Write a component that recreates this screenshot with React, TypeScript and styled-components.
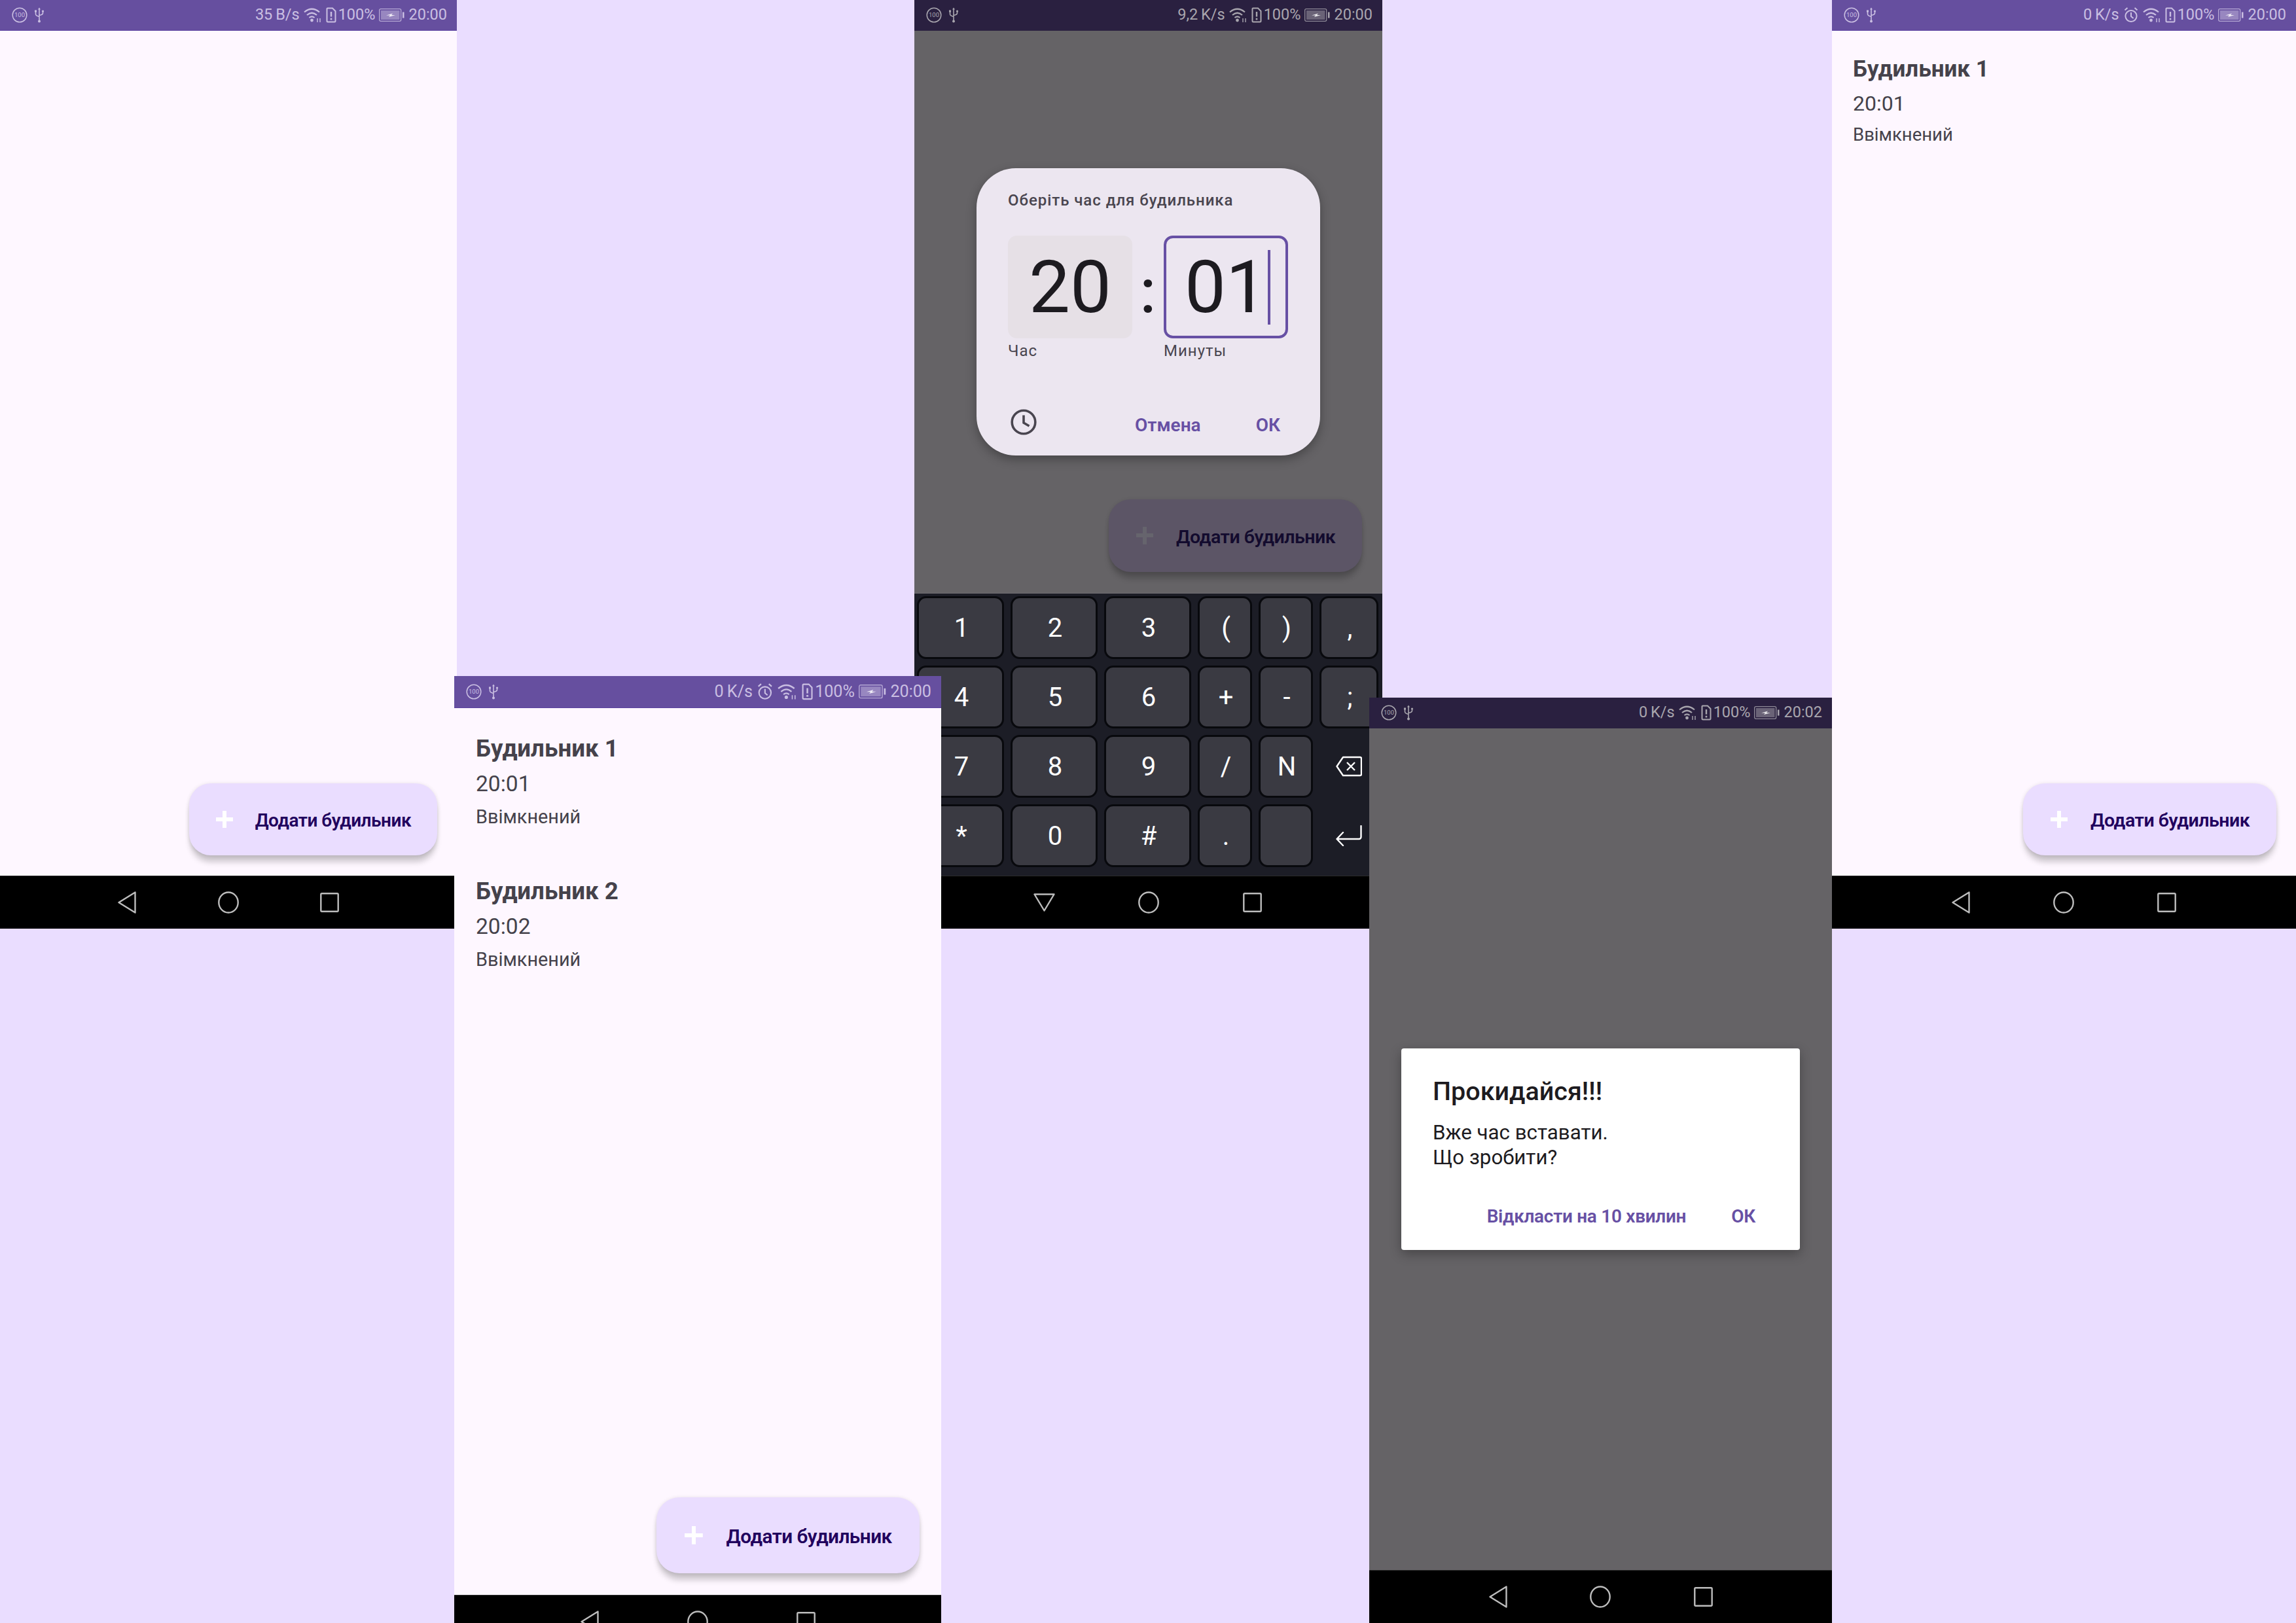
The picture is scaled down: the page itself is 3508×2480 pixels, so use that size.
import styled, { createGlobalStyle } from "styled-components";

const Global = createGlobalStyle`
  html, body {
    margin: 0;
    padding: 0;
    background: #eaddff;
  }
  * {
    box-sizing: border-box;
  }
`;

/////////////

const KEY_ROWS = [
  ["1", "2", "3", "(", ")", ","],
  ["4", "5", "6", "+", "-", ";"],
  ["7", "8", "9", "/", "N", "backspace"],
  ["*", "0", "#", ".", "", "enter"],
];

function Hundred() {
  return (
    <svg width="24" height="24" viewBox="0 0 24 24">
      <circle cx="12" cy="12" r="10.8" fill="none" stroke="currentColor" strokeWidth="1.5" />
      <text x="12" y="15.4" fontSize="9.5" textAnchor="middle" fill="currentColor" fontFamily="Roboto, sans-serif">
        100
      </text>
    </svg>
  );
}

function Usb() {
  return (
    <svg width="16" height="24" viewBox="0 0 16 24" fill="none" stroke="currentColor" strokeWidth="1.6">
      <path d="M8 3v18M2.5 7v3.5q0 2.5 5.5 4M13.5 7v2q0 2.5-5.5 3.5" />
      <path d="M8 0.5l2 3H6z" fill="currentColor" stroke="none" />
      <rect x="1" y="4.5" width="3" height="3" fill="currentColor" stroke="none" />
      <circle cx="13.5" cy="6" r="1.6" fill="currentColor" stroke="none" />
      <circle cx="8" cy="21.5" r="2" fill="currentColor" stroke="none" />
    </svg>
  );
}

function Alarm() {
  return (
    <svg width="24" height="26" viewBox="0 0 24 26" fill="none" stroke="currentColor" strokeWidth="2">
      <circle cx="12" cy="14.5" r="8.6" />
      <path d="M12 9v6l3.6 3M2.5 5.5l4-3.5M21.5 5.5l-4-3.5" />
    </svg>
  );
}

function Wifi() {
  return (
    <svg width="28" height="24" viewBox="0 0 28 24" fill="none" stroke="currentColor" strokeWidth="2.2">
      <path d="M1 7.5q11.5-9.5 23 0M5 12q7.5-6.5 15 0M8.5 16q4-3.2 8 0" />
      <circle cx="12.5" cy="20" r="2.4" fill="currentColor" stroke="none" />
      <path d="M21 23v-6M25 17v6" strokeWidth="1.4" />
    </svg>
  );
}

function Sim() {
  return (
    <SimSlot>
      <svg width="16" height="24" viewBox="0 0 16 24" fill="none" stroke="currentColor" strokeWidth="2">
        <path d="M2.5 1.5h7.5l4.5 4.5v15a1.500 1.500 0 0 1-1.500 1.500H3a1.500 1.500 0 0 1-1.500-1.500V2.500a1 1 0 0 1 1-1z" />
        <path d="M8 7v7.500" strokeWidth="2.4" />
        <circle cx="8" cy="18" r="1.5" fill="currentColor" stroke="none" />
      </svg>
    </SimSlot>
  );
}

function Battery() {
  return (
    <svg width="39" height="20" viewBox="0 0 39 20">
      <rect x="0.7" y="0.7" width="33" height="18.6" rx="2" fill="none" stroke="currentColor" strokeWidth="1.3" opacity="0.8" />
      <rect x="3" y="3" width="28.5" height="14" fill="currentColor" opacity="0.5" />
      <path d="M11 10.5l10-3-2 2.5h6l-10 3 2-2.500z" fill="#fff" opacity="0.85" />
      <rect x="36" y="5.5" width="2.5" height="9" fill="currentColor" />
    </svg>
  );
}

function BackIcon() {
  return (
    <svg width="28" height="34" viewBox="0 0 28 34" fill="none" stroke="#bdbdbd" strokeWidth="2.4" strokeLinejoin="round">
      <path d="M26.5 1.5v31L1.5 17z" />
    </svg>
  );
}

function DownIcon() {
  return (
    <svg width="33" height="28" viewBox="0 0 33 28" fill="none" stroke="#bdbdbd" strokeWidth="2.4" strokeLinejoin="round">
      <path d="M1.5 1.5h30L16.5 26.5z" />
    </svg>
  );
}

function HomeIcon() {
  return (
    <svg width="32" height="34" viewBox="0 0 32 34" fill="none" stroke="#bdbdbd" strokeWidth="2.4">
      <ellipse cx="16" cy="17" rx="14.7" ry="15.5" />
    </svg>
  );
}

function RecentIcon() {
  return (
    <svg width="29" height="30" viewBox="0 0 29 30" fill="none" stroke="#bdbdbd" strokeWidth="2.4">
      <rect x="1.3" y="1.3" width="26.4" height="27.4" rx="1.5" />
    </svg>
  );
}

function ClockIcon() {
  return (
    <svg width="40" height="40" viewBox="0 0 40 40" fill="none" stroke="#49454f" strokeWidth="3.6">
      <circle cx="20" cy="20" r="17.8" />
      <path d="M20 9.5v11.5l8.5 5" />
    </svg>
  );
}

function BackspaceIcon() {
  return (
    <svg width="40" height="32" viewBox="0 0 40 32" fill="none" stroke="#fff" strokeWidth="2.4" strokeLinejoin="round">
      <path d="M11 2h26a2 2 0 0 1 2 2v24a2 2 0 0 1-2 2H11L1.5 16z" />
      <path d="M17 10l12 12M29 10l-12 12" />
    </svg>
  );
}

function EnterIcon() {
  return (
    <svg width="40" height="32" viewBox="0 0 40 32" fill="none" stroke="#fff" strokeWidth="2.4" strokeLinejoin="round" strokeLinecap="round">
      <path d="M38.5 1v17a3 3 0 0 1-3 3H2M11 11L1.5 21 11 31" />
    </svg>
  );
}

/////////////

type StatusProps = {
  speed: string;
  time: string;
  alarm?: boolean;
  dim?: boolean;
  height?: number;
  s?: number;
};

function StatusBar({ speed, time, alarm, dim, height = 47, s = 1 }: StatusProps) {
  return (
    <Status $dim={dim} $height={height}>
      <StatusLeft>
        <Hundred />
        <Usb />
      </StatusLeft>
      <StatusRight $s={s}>
        <StatusText>{speed}</StatusText>
        {alarm && <Alarm />}
        <Wifi />
        <Sim />
        <StatusText>100%</StatusText>
        <Battery />
        <StatusText>{time}</StatusText>
      </StatusRight>
    </Status>
  );
}

function Nav({ down }: { down?: boolean }) {
  return (
    <NavBar>
      <NavSlot>{down ? <DownIcon /> : <BackIcon />}</NavSlot>
      <NavSlot>
        <HomeIcon />
      </NavSlot>
      <NavSlot>
        <RecentIcon />
      </NavSlot>
    </NavBar>
  );
}

type AddButtonProps = {
  s?: number;
  height?: number;
  right?: number;
  bottom?: number;
  dim?: boolean;
};

function AddButton({ s = 1, height = 110, right = 30, bottom = 31, dim }: AddButtonProps) {
  return (
    <FabRow $right={right} $bottom={bottom}>
      <Fab $s={s} $height={height} $dim={dim}>
        <Plus $s={s} $dim={dim} />
        <FabText $s={s} $dim={dim}>
          Додати будильник
        </FabText>
      </Fab>
    </FabRow>
  );
}

function AlarmItem({ name, time, s = 1 }: { name: string; time: string; s?: number }) {
  return (
    <AlarmRow $s={s}>
      <AlarmName $s={s}>{name}</AlarmName>
      <AlarmTime $s={s}>{time}</AlarmTime>
      <AlarmState $s={s}>Ввімкнений</AlarmState>
    </AlarmRow>
  );
}

export default function App() {
  return (
    <Stage>
      <Global />

      <Screen $left={0} $top={0} $width={698} $height={1419} $z={1}>
        <StatusBar speed="35 B/s" time="20:00" />
        <Body>
          <AlarmList />
          <AddButton />
        </Body>
        <Nav />
      </Screen>

      <Screen $left={694} $top={1033} $width={744} $height={1485} $z={3}>
        <StatusBar speed="0 K/s" time="20:00" alarm height={49} s={1.07} />
        <Body>
          <AlarmList $left={33}>
            <AlarmItem name="Будильник 1" time="20:01" s={1.048} />
            <AlarmItem name="Будильник 2" time="20:02" s={1.048} />
          </AlarmList>
          <AddButton s={1.06} height={116} right={33} bottom={33} />
        </Body>
        <Nav />
      </Screen>

      <Screen $left={1397} $top={0} $width={715} $height={1419} $z={2}>
        <StatusBar speed="9,2 K/s" time="20:00" dim />
        <DimBody>
          <PickerDialog>
            <PickerTitle>Оберіть час для будильника</PickerTitle>
            <PickerFields>
              <PickerField>
                <HourBox>20</HourBox>
                <FieldLabel>Час</FieldLabel>
              </PickerField>
              <Colon>:</Colon>
              <PickerField>
                <MinuteBox>
                  01
                  <Caret />
                </MinuteBox>
                <FieldLabel>Минуты</FieldLabel>
              </PickerField>
            </PickerFields>
            <PickerActions>
              <ClockIcon />
              <ActionSpacer />
              <TextButton>Отмена</TextButton>
              <TextButton>ОК</TextButton>
            </PickerActions>
          </PickerDialog>
          <AddButton dim s={1.02} height={111} right={31} bottom={32} />
        </DimBody>
        <Keyboard>
          {KEY_ROWS.flat().map((k, i) =>
            k === "backspace" ? (
              <KeyIcon key={i}>
                <BackspaceIcon />
              </KeyIcon>
            ) : k === "enter" ? (
              <KeyIcon key={i}>
                <EnterIcon />
              </KeyIcon>
            ) : (
              <Key key={i}>{k}</Key>
            )
          )}
        </Keyboard>
        <Nav down />
      </Screen>

      <Screen $left={2092} $top={1066} $width={707} $height={1414} $z={4}>
        <StatusBar speed="0 K/s" time="20:02" dim />
        <AlertBody>
          <AlertDialog>
            <AlertTitle>Прокидайся!!!</AlertTitle>
            <AlertText>
              Вже час вставати.
              <br />
              Що зробити?
            </AlertText>
            <AlertActions>
              <AlertButton>Відкласти на 10 хвилин</AlertButton>
              <AlertButton>ОК</AlertButton>
            </AlertActions>
          </AlertDialog>
        </AlertBody>
        <Nav />
      </Screen>

      <Screen $left={2799} $top={0} $width={709} $height={1419} $z={1}>
        <StatusBar speed="0 K/s" time="20:00" alarm />
        <Body>
          <AlarmList $left={32}>
            <AlarmItem name="Будильник 1" time="20:01" />
          </AlarmList>
          <AddButton s={1.02} />
        </Body>
        <Nav />
      </Screen>
    </Stage>
  );
}

const Stage = styled.div`
  position: relative;
  width: 3508px;
  height: 2480px;
  overflow: hidden;
  background: #eaddff;
  font-family: Roboto, "Noto Sans", sans-serif;
`;

// each screenshot sits freely on the sheet, so these keep absolute placement
const Screen = styled.div<{ $left: number; $top: number; $width: number; $height: number; $z: number }>`
  position: absolute;
  left: ${(p) => p.$left}px;
  top: ${(p) => p.$top}px;
  width: ${(p) => p.$width}px;
  height: ${(p) => p.$height}px;
  z-index: ${(p) => p.$z};
  display: flex;
  flex-direction: column;
  background: #fef7ff;
`;

const Status = styled.div<{ $dim?: boolean; $height: number }>`
  flex: 0 0 ${(p) => p.$height}px;
  display: flex;
  align-items: center;
  justify-content: space-between;
  padding: 0 15px 0 18px;
  background: ${(p) => (p.$dim ? "#2a2040" : "#664f9f")};
  color: ${(p) => (p.$dim ? "#a9a6ae" : "#cabfe2")};
  border-bottom: 1px solid ${(p) => (p.$dim ? "#2a2040" : "#5a41a0")};
`;

const StatusLeft = styled.div`
  display: flex;
  align-items: center;
  gap: 10px;
`;

const StatusRight = styled.div<{ $s: number }>`
  display: flex;
  align-items: center;
  gap: 6px;
  zoom: ${(p) => p.$s};
`;

const StatusText = styled.span`
  font-size: 23.5px;
  font-stretch: 90%;
  word-spacing: -1px;
  line-height: 1;
`;

const SimSlot = styled.span`
  display: flex;
  margin-right: -3px;
`;

const NavBar = styled.div`
  flex: 0 0 81px;
  display: flex;
  align-items: center;
  justify-content: center;
  background: #000;
  border-top: 1px solid #2b2b2b;
`;

const NavSlot = styled.div`
  flex: 0 0 22.2%;
  display: flex;
  justify-content: center;
`;

const Body = styled.div`
  flex: 1;
  display: flex;
  flex-direction: column;
`;

const AlarmList = styled.div<{ $left?: number }>`
  flex: 1;
  padding-left: ${(p) => p.$left ?? 32}px;
`;

const AlarmRow = styled.div<{ $s: number }>`
  display: flex;
  flex-direction: column;
  padding-top: ${(p) => 39 * p.$s}px;
  padding-bottom: ${(p) => 31 * p.$s}px;
  color: #45424b;
`;

const AlarmName = styled.div<{ $s: number }>`
  font-size: ${(p) => 35 * p.$s}px;
  line-height: ${(p) => 40 * p.$s}px;
  font-weight: 700;
  font-stretch: 90%;
`;

const AlarmTime = styled.div<{ $s: number }>`
  font-size: ${(p) => 32 * p.$s}px;
  line-height: ${(p) => 40 * p.$s}px;
  margin-top: ${(p) => 12 * p.$s}px;
  font-stretch: 90%;
`;

const AlarmState = styled.div<{ $s: number }>`
  font-size: ${(p) => 27.5 * p.$s}px;
  line-height: ${(p) => 36 * p.$s}px;
  margin-top: ${(p) => 10 * p.$s}px;
  font-stretch: 90%;
`;

const FabRow = styled.div<{ $right: number; $bottom: number }>`
  display: flex;
  justify-content: flex-end;
  padding: 0 ${(p) => p.$right}px ${(p) => p.$bottom}px 0;
`;

const Fab = styled.div<{ $s: number; $height: number; $dim?: boolean }>`
  display: flex;
  align-items: center;
  height: ${(p) => p.$height}px;
  padding: 0 ${(p) => 40 * p.$s}px 0 ${(p) => 41 * p.$s}px;
  gap: ${(p) => 34 * p.$s}px;
  border-radius: ${(p) => 33 * p.$s}px;
  background: ${(p) => (p.$dim ? "#5c5566" : "#eaddff")};
  box-shadow: 0 12px 10px -2px rgba(0, 0, 0, 0.2), 0 1px 6px rgba(0, 0, 0, 0.12);
`;

const Plus = styled.span<{ $s: number; $dim?: boolean }>`
  width: ${(p) => 26 * p.$s}px;
  height: ${(p) => 26 * p.$s}px;
  background:
    linear-gradient(${(p) => (p.$dim ? "#66646d" : "#fff")}, ${(p) => (p.$dim ? "#66646d" : "#fff")}) center / 100% 6px no-repeat,
    linear-gradient(${(p) => (p.$dim ? "#66646d" : "#fff")}, ${(p) => (p.$dim ? "#66646d" : "#fff")}) center / 6px 100% no-repeat;
`;

const FabText = styled.span<{ $s: number; $dim?: boolean }>`
  margin-top: 3px;
  font-size: ${(p) => 28 * p.$s}px;
  font-weight: 600;
  font-stretch: 92%;
  letter-spacing: -0.5px;
  color: ${(p) => (p.$dim ? "#130b2e" : "#21005d")};
  white-space: nowrap;
`;

const DimBody = styled.div`
  flex: 1;
  display: flex;
  flex-direction: column;
  justify-content: flex-end;
  background: #656366;
`;

const PickerDialog = styled.div`
  width: 525px;
  height: 439px;
  margin: 0 0 67px 95px;
  padding: 32px 47px 0 48px;
  display: flex;
  flex-direction: column;
  background: #ece6f0;
  border-radius: 60px;
  box-shadow: 0 6px 16px rgba(0, 0, 0, 0.3);
`;

const PickerTitle = styled.div`
  font-size: 24px;
  font-weight: 500;
  line-height: 34px;
  letter-spacing: 0.95px;
  color: #49454f;
`;

const PickerFields = styled.div`
  display: flex;
  margin-top: 37px;
`;

const PickerField = styled.div`
  display: flex;
  flex-direction: column;
  width: 190px;
`;

const HourBox = styled.div`
  height: 157px;
  display: flex;
  align-items: center;
  justify-content: center;
  background: #e6e0e6;
  border-radius: 14px;
  font-size: 112px;
  color: #1d1b20;
`;

const MinuteBox = styled(HourBox)`
  background: transparent;
  border: 4px solid #6750a4;
`;

const Caret = styled.span`
  width: 4px;
  height: 114px;
  margin-left: 1px;
  margin-right: -5px;
  background: #6750a4;
`;

const Colon = styled.div`
  width: 48px;
  height: 157px;
  padding-top: 14px;
  display: flex;
  align-items: center;
  justify-content: center;
  font-size: 92px;
  font-weight: 500;
  color: #1d1b20;
`;

const FieldLabel = styled.div`
  margin-top: 2px;
  font-size: 24px;
  line-height: 34px;
  letter-spacing: 1px;
  color: #49454f;
`;

const PickerActions = styled.div`
  display: flex;
  align-items: center;
  gap: 84px;
  margin-top: 70px;
  padding-left: 4px;
  padding-right: 14px;
`;

const ActionSpacer = styled.div`
  flex: 1;
  margin-right: -84px;
`;

const TextButton = styled.span`
  margin-top: 10px;
  font-size: 28px;
  font-weight: 600;
  color: #6750a4;
`;

const Keyboard = styled.div`
  flex: 0 0 432px;
  display: grid;
  grid-template-columns: 133px 133px 133px 83px 83px 90px;
  grid-auto-rows: 96px;
  gap: 10px;
  padding: 4px 0 0 4px;
  background: #1c1d26;
  border-top: 1px solid #6f6d72;
`;

const Key = styled.div`
  display: flex;
  align-items: center;
  justify-content: center;
  padding-left: 3px;
  background: #3a3a42;
  border: 3px solid #08090d;
  border-radius: 14px;
  font-size: 40px;
  color: #fff;
`;

const KeyIcon = styled.div`
  display: flex;
  align-items: center;
  justify-content: center;
`;

const AlertBody = styled.div`
  flex: 1;
  display: flex;
  align-items: center;
  justify-content: center;
  background: #656366;
`;

const AlertDialog = styled.div`
  width: 609px;
  height: 308px;
  padding: 44px 68px 0 48px;
  display: flex;
  flex-direction: column;
  background: #fff;
  border-radius: 4px;
  box-shadow: 0 6px 18px rgba(0, 0, 0, 0.3);
`;

const AlertTitle = styled.div`
  font-size: 39.5px;
  font-weight: 500;
  line-height: 44px;
  color: #1d1b20;
`;

const AlertText = styled.div`
  margin-top: 22px;
  font-size: 31.3px;
  line-height: 38px;
  color: #1d1b20;
`;

const AlertActions = styled.div`
  display: flex;
  justify-content: flex-end;
  align-items: center;
  gap: 69px;
  margin-top: 54px;
`;

const AlertButton = styled.span`
  font-size: 28px;
  font-weight: 600;
  letter-spacing: -0.3px;
  color: #6750a4;
`;
